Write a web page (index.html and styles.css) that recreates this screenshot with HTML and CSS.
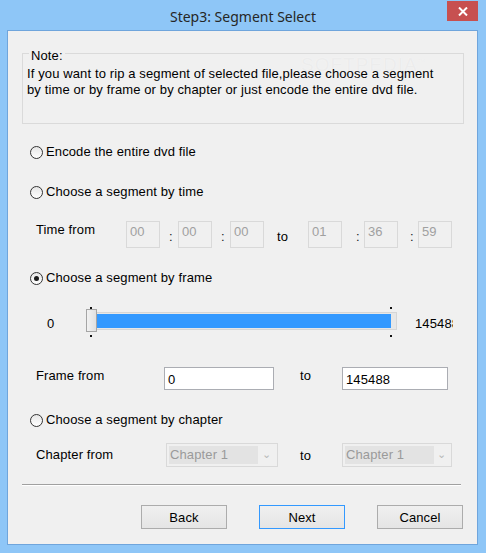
FILE: index.html
```html
<!DOCTYPE html>
<html lang="en">
<head>
    <meta charset="UTF-8">
    <title>Step3: Segment Select</title>
    <link rel="stylesheet" href="styles.css">
</head>
<body>

<div class="window">
    <div class="titlebar">
        <div class="title">Step3: Segment Select</div>
        <div class="close">
            <svg width="10" height="9" viewBox="0 0 10 9">
                <path d="M1 0.5 L9 8.5 M9 0.5 L1 8.5" stroke="#fff" stroke-width="2"/>
            </svg>
        </div>
    </div>

    <div class="client">
        <div class="groupbox">
            <span class="group-title">Note:</span>
            <div class="watermark">SOFTPEDIA<sup>™</sup></div>
            <p>If you want to rip a segment of selected file,please choose a segment<br>
            by time or by frame or by chapter or just encode the entire dvd file.</p>
        </div>

        <div class="radio-row r1"><span class="radio"></span>Encode the entire dvd file</div>
        <div class="radio-row r2"><span class="radio"></span>Choose a segment by time</div>

        <div class="time-row">
            <span class="label">Time from</span>
            <span class="tbox">00</span>
            <span class="colon c1">:</span>
            <span class="tbox">00</span>
            <span class="colon c1">:</span>
            <span class="tbox">00</span>
            <span class="to-time">to</span>
            <span class="tbox">01</span>
            <span class="colon c3">:</span>
            <span class="tbox">36</span>
            <span class="colon c4">:</span>
            <span class="tbox">59</span>
        </div>

        <div class="radio-row r3"><span class="radio checked"></span>Choose a segment by frame</div>

        <div class="slider-row">
            <span class="min">0</span>
            <div class="slider">
                <div class="fill"></div>
                <div class="thumb"></div>
                <i class="tick tl"></i><i class="tick bl"></i>
                <i class="tick tr"></i><i class="tick br"></i>
            </div>
            <span class="max">145488</span>
        </div>

        <div class="frame-row">
            <span class="label wide">Frame from</span>
            <span class="edit e1">0</span>
            <span class="to">to</span>
            <span class="edit e2">145488</span>
        </div>

        <div class="radio-row r4"><span class="radio"></span>Choose a segment by chapter</div>

        <div class="chapter-row">
            <span class="label chap">Chapter from</span>
            <div class="combo k1"><span class="sel">Chapter 1</span><span class="arrow">&#8964;</span></div>
            <span class="to chapter-to">to</span>
            <div class="combo k2"><span class="sel">Chapter 1</span><span class="arrow">&#8964;</span></div>
        </div>

        <div class="separator"></div>

        <div class="buttons">
            <button>Back</button>
            <button class="default">Next</button>
            <button>Cancel</button>
        </div>
    </div>
</div>

</body>
</html>
```

FILE: styles.css
```css
body {
    margin: 0;
    padding: 0;
    font-family: "Liberation Sans", Arial, sans-serif;
    font-size: 13px;
    line-height: 16px;
    letter-spacing: 0.12px;
    color: #000;
}
.window {
    width: 486px;
    height: 553px;
    box-sizing: border-box;
    background-color: #8ec6f7;
    padding: 0 8px 8px 7px;
    display: flex;
    flex-direction: column;
}
.titlebar {
    height: 30px;
    position: relative;
    flex-shrink: 0;
}
.title {
    font-family: "Noto Sans", "Open Sans", sans-serif;
    font-size: 14px;
    letter-spacing: 0;
    line-height: 30px;
    text-align: center;
    color: #262626;
    margin-left: -7px;
    margin-right: -8px;
    padding-top: 2px;
}
.close {
    position: absolute;
    right: 0;
    top: 1px;
    width: 31px;
    height: 20px;
    background-color: #c75050;
    display: flex;
    justify-content: center;
    align-items: center;
}
.client {
    flex: 1;
    background-color: #f0f0f0;
    border: 1px solid #6fa5dc;
    display: flex;
    flex-direction: column;
}

/* note box */
.groupbox {
    position: relative;
    margin: 22px 0 0 14px;
    width: 442px;
    height: 71px;
    box-sizing: border-box;
    border: 1px solid #dadada;
    padding: 12px 0 0 4px;
}
.groupbox p {
    position: relative;
    margin: 0;
}
.group-title {
    position: absolute;
    top: -6px;
    left: 6px;
    padding: 0 2px;
    background-color: #f0f0f0;
}
.watermark {
    position: absolute;
    left: 278px;
    top: 0px;
    font-size: 19px;
    letter-spacing: 1px;
    color: #ececec;
    text-shadow: 0 0 1px #fafafa;
}
.watermark sup {
    font-size: 7px;
}

/* radio buttons */
.radio-row {
    display: flex;
    align-items: center;
    margin-left: 22px;
    height: 16px;
}
.r1 { margin-top: 20px; }
.r2 { margin-top: 24px; }
.r3 { margin-top: 22px; }
.r4 { margin-top: 22px; }
.radio {
    width: 13px;
    height: 13px;
    box-sizing: border-box;
    border: 1px solid #333;
    border-radius: 50%;
    background: linear-gradient(#e6e6e6, #ffffff);
    margin-right: 3px;
    display: flex;
    justify-content: center;
    align-items: center;
}
.radio.checked::after {
    content: "";
    width: 5px;
    height: 5px;
    border-radius: 50%;
    background-color: #1a1a1a;
}

.label {
    width: 90px;
    margin-left: 28px;
    padding-top: 1px;
}

/* time row */
.time-row {
    display: flex;
    align-items: flex-start;
    margin-top: 21px;
    height: 27px;
}
.tbox {
    width: 34px;
    height: 27px;
    box-sizing: border-box;
    border: 1px solid #d9d9d9;
    color: #a0a0a0;
    padding: 2px 0 0 3px;
}
.colon {
    box-sizing: border-box;
    padding-top: 8px;
    color: #222;
}
.c1 { width: 18px; padding-left: 9px; }
.c3 { width: 22px; padding-left: 14px; }
.c4 { width: 20px; padding-left: 12px; }
.to-time {
    width: 44px;
    box-sizing: border-box;
    padding: 8px 0 0 13px;
}

/* slider */
.slider-row {
    display: flex;
    align-items: flex-start;
    margin-top: 19px;
    height: 32px;
}
.min {
    width: 50px;
    margin-left: 28px;
    padding: 11px 0 0 11px;
    box-sizing: border-box;
}
.slider {
    position: relative;
    width: 311px;
    height: 18px;
    margin-top: 7px;
    box-sizing: border-box;
    border: 1px solid #d6d6d6;
    background-color: #e7e7e7;
    padding: 1px 5px 1px 9px;
}
.fill {
    height: 14px;
    background-color: #3399ff;
}
.thumb {
    position: absolute;
    left: -1px;
    top: -4px;
    width: 11px;
    height: 23px;
    box-sizing: border-box;
    border: 1px solid #a5a5a5;
    background: linear-gradient(to right, #f2f2f2, #e0e0e0);
}
.tick {
    position: absolute;
    width: 2px;
    height: 2px;
    background-color: #111;
}
.tl { left: 3px; top: -6px; }
.bl { left: 3px; top: 22px; }
.tr { left: 303px; top: -6px; }
.br { left: 303px; top: 22px; }
.max {
    width: 38px;
    overflow: hidden;
    white-space: nowrap;
    margin-left: 18px;
    padding-top: 11px;
}

/* frame row */
.frame-row {
    display: flex;
    align-items: flex-start;
    margin-top: 30px;
    height: 23px;
}
.label.wide {
    width: 128px;
    padding-top: 1px;
}
.edit {
    height: 23px;
    box-sizing: border-box;
    border: 1px solid #abadb3;
    background-color: #fff;
    padding: 4px 0 0 3px;
}
.e1 { width: 110px; }
.e2 { width: 106px; }
.to {
    width: 68px;
    box-sizing: border-box;
    padding: 1px 0 0 26px;
}

/* chapter row */
.chapter-row {
    display: flex;
    align-items: flex-start;
    margin-top: 15px;
    height: 24px;
}
.label.chap {
    width: 130px;
    padding-top: 4px;
}
.chapter-to {
    width: 64px;
    padding: 5px 0 0 22px;
}
.combo {
    height: 24px;
    box-sizing: border-box;
    border: 1px solid #d9d9d9;
    display: flex;
    align-items: center;
    padding: 0 2px;
}
.k1 { width: 112px; }
.k2 { width: 110px; }
.sel {
    width: 89px;
    height: 18px;
    background-color: #e3e3e3;
    color: #9a9a9a;
    line-height: 17px;
    padding-left: 1px;
    box-sizing: border-box;
}
.arrow {
    flex: 1;
    text-align: center;
    color: #b8b8b8;
    font-size: 11px;
    margin-top: -3px;
}

.separator {
    margin: 17px 16px 0 14px;
    border-top: 1px solid #a0a0a0;
    border-bottom: 1px solid #fff;
}

/* buttons */
.buttons {
    display: flex;
    justify-content: flex-end;
    gap: 32px;
    margin: 19px 14px 0 0;
}
button {
    width: 86px;
    height: 24px;
    font-family: "Liberation Sans", Arial, sans-serif;
    font-size: 13px;
    letter-spacing: 0.12px;
    color: #000;
    border: 1px solid #acacac;
    background: linear-gradient(#f0f0f0, #e5e5e5);
    padding: 0;
}
button.default {
    border-color: #3399ff;
}
```
